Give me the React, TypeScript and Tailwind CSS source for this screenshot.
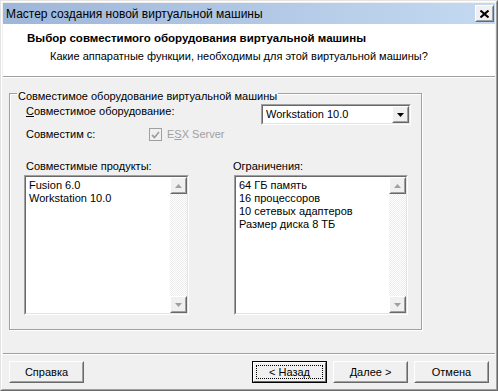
import type { ReactNode } from "react";

const LIMITS = ["64 ГБ память", "16 процессоров", "10 сетевых адаптеров", "Размер диска 8 ТБ"];
const PRODUCTS = ["Fusion 6.0", "Workstation 10.0"];

function Sunken({ className, children }: { className: string; children: ReactNode }) {
  return (
    <div className={`border border-t-[#a0a0a0] border-l-[#a0a0a0] border-r-white border-b-white ${className}`}>
      <div className="h-full border border-t-[#696969] border-l-[#696969] border-r-[#e3e3e3] border-b-[#e3e3e3]">
        {children}
      </div>
    </div>
  );
}

function Raised({ className, children }: { className: string; children?: ReactNode }) {
  return (
    <div className={`border border-t-white border-l-white border-r-[#696969] border-b-[#696969] bg-[#f0f0f0] ${className}`}>
      <div className="h-full border border-t-[#f0f0f0] border-l-[#f0f0f0] border-r-[#a0a0a0] border-b-[#a0a0a0] flex items-center justify-center">
        {children}
      </div>
    </div>
  );
}

function Arrow({ down, color }: { down?: boolean; color: string }) {
  return (
    <svg width="7" height="4" viewBox="0 0 7 4" className="block">
      <path d={down ? "M0 0h7L3.5 4z" : "M0 4h7L3.5 0z"} fill={color} />
    </svg>
  );
}

function ScrollBar() {
  return (
    <div className="w-[17px] flex flex-col">
      <Raised className="h-[17px]">
        <Arrow color="#a0a0a0" />
      </Raised>
      <div className="flex-1 bg-[repeating-conic-gradient(#ffffff_0%_25%,#ececec_0%_50%)] bg-[length:2px_2px]" />
      <Raised className="h-[17px]">
        <Arrow down color="#a0a0a0" />
      </Raised>
    </div>
  );
}

function ListBox({ items, className }: { items: string[]; className: string }) {
  return (
    <Sunken className={`h-[140px] ${className}`}>
      <div className="flex h-full bg-white">
        <div className="flex-1 pl-[3px] pt-[2px] leading-[13px]">
          {items.map((i) => (
            <div key={i}>{i}</div>
          ))}
        </div>
        <ScrollBar />
      </div>
    </Sunken>
  );
}

function Button({ label, focused }: { label: string; focused?: boolean }) {
  if (focused) {
    return (
      <div className="w-[75px] h-[22px] border border-black">
        <div className="h-full border border-t-white border-l-white border-r-[#696969] border-b-[#696969] bg-[#f0f0f0] p-[2px]">
          <div className="h-full border border-dotted border-black flex items-center justify-center leading-[13px]">
            {label}
          </div>
        </div>
      </div>
    );
  }
  return (
    <Raised className="w-[75px] h-[22px]">
      <span className="leading-[13px]">{label}</span>
    </Raised>
  );
}

export default function App() {
  return (
    <div className="w-[498px] h-[391px] border border-t-[#e3e3e3] border-l-[#e3e3e3] border-r-[#696969] border-b-[#696969] font-['Liberation_Sans',Arial,sans-serif] text-[11px] text-black">
      <div className="h-full border border-t-white border-l-white border-r-[#a0a0a0] border-b-[#a0a0a0] bg-[#f0f0f0] p-px flex flex-col">
        {/* title bar */}
        <div className="h-[21px] flex items-center justify-between bg-gradient-to-r from-[#9eb6d8] to-[#c4d9f1] pl-[3px]">
          <span className="text-[12px] leading-[14px]">Мастер создания новой виртуальной машины</span>
          <Raised className="w-[19px] h-[17px] mr-px">
            <svg width="9" height="8" viewBox="0 0 9 8" className="block">
              <path d="M0.5 0.5L8.5 7.5M8.5 0.5L0.5 7.5" stroke="#000" strokeWidth="2" />
            </svg>
          </Raised>
        </div>

        {/* header */}
        <div className="h-[52px] bg-white pt-[8px] leading-[13px]">
          <div className="pl-[24px] font-bold text-[11.5px]">Выбор совместимого оборудования виртуальной машины</div>
          <div className="pl-[47px] mt-[5px]">Какие аппаратные функции, необходимы для этой виртуальной машины?</div>
        </div>
        <div className="h-px bg-[#a0a0a0]" />
        <div className="h-px bg-white" />

        {/* body */}
        <div className="flex-1 pt-[6px] pl-[6px]">
          <fieldset className="w-[413px] h-[246px] border border-[#a0a0a0] shadow-[inset_1px_1px_0_#ffffff,1px_1px_0_#ffffff] leading-[13px]">
            <legend className="ml-[7px] px-px pt-[6px]">Совместимое оборудование виртуальной машины</legend>

            <div className="flex items-start mt-px pl-[16px]">
              <div className="w-[235px] mt-px">
                <span className="underline">С</span>овместимое оборудование:
              </div>
              <Sunken className="w-[150px] h-[21px]">
                <div className="flex h-full bg-white items-center">
                  <span className="flex-1 pl-[3px]">Workstation 10.0</span>
                  <Raised className="w-[17px] h-[17px]">
                    <Arrow down color="#000" />
                  </Raised>
                </div>
              </Sunken>
            </div>

            <div className="flex items-center mt-[3px] pl-[16px] h-[13px]">
              <div className="w-[123px]">Совместим с:</div>
              <div className="w-[13px] h-[13px] border border-[#a0a0a0] bg-[#f0f0f0] flex items-center justify-center">
                <svg width="9" height="8" viewBox="0 0 9 8" className="block">
                  <path d="M1 4l2.5 2.5L8 1" stroke="#a0a0a0" strokeWidth="1.8" fill="none" />
                </svg>
              </div>
              <span className="ml-[5px] text-[#a0a0a0]">
                E<span className="underline">S</span>X Server
              </span>
            </div>

            <div className="flex mt-[19px] pl-[14px]">
              <div className="w-[209px]">
                <div className="pl-[2px] mb-[2px]">Совместимые продукты:</div>
                <ListBox items={PRODUCTS} className="w-[165px]" />
              </div>
              <div>
                <div className="mb-[2px]">Ограничения:</div>
                <ListBox items={LIMITS} className="w-[174px] ml-px" />
              </div>
            </div>
          </fieldset>
        </div>

        <div className="h-px bg-[#a0a0a0]" />
        <div className="h-px bg-white" />

        {/* footer */}
        <div className="h-[33px] flex items-start pt-[6px] px-[6px]">
          <Button label="Справка" />
          <div className="flex-1" />
          <div className="flex gap-[6px]">
            <Button label="< Назад" focused />
            <Button label="Далее >" />
            <Button label="Отмена" />
          </div>
        </div>
      </div>
    </div>
  );
}
